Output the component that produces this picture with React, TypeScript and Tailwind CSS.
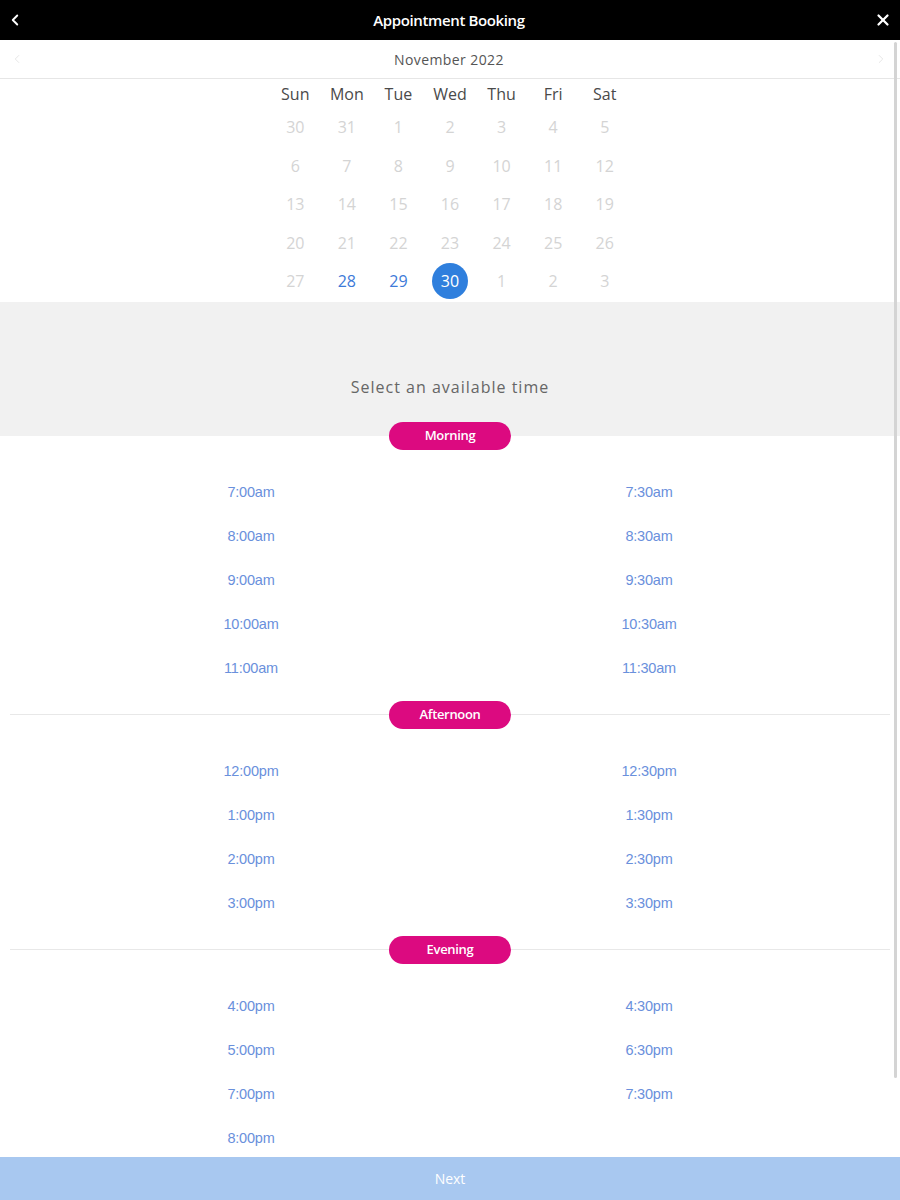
import { ChevronLeft, ChevronRight, X } from "lucide-react";

const weekdays = ["Sun", "Mon", "Tue", "Wed", "Thu", "Fri", "Sat"];

const weeks: number[][] = [
  [30, 31, 1, 2, 3, 4, 5],
  [6, 7, 8, 9, 10, 11, 12],
  [13, 14, 15, 16, 17, 18, 19],
  [20, 21, 22, 23, 24, 25, 26],
  [27, 28, 29, 30, 1, 2, 3],
];

const sections = [
  {
    name: "Morning",
    times: [
      ["7:00am", "7:30am"],
      ["8:00am", "8:30am"],
      ["9:00am", "9:30am"],
      ["10:00am", "10:30am"],
      ["11:00am", "11:30am"],
    ],
  },
  {
    name: "Afternoon",
    times: [
      ["12:00pm", "12:30pm"],
      ["1:00pm", "1:30pm"],
      ["2:00pm", "2:30pm"],
      ["3:00pm", "3:30pm"],
    ],
  },
  {
    name: "Evening",
    times: [
      ["4:00pm", "4:30pm"],
      ["5:00pm", "6:30pm"],
      ["7:00pm", "7:30pm"],
      ["8:00pm", ""],
    ],
  },
];

const Pill = ({ label }: { label: string }) => (
  <div
    className="w-[122px] h-[28px] rounded-full bg-[#dc0a80] text-white text-[13px] font-semibold tracking-tight flex items-center justify-center shrink-0"
    style={{ fontFamily: '"Open Sans", sans-serif' }}
  >
    {label}
  </div>
);

export default function App() {
  return (
    <div
      className="w-[900px] h-[1200px] relative overflow-hidden bg-white flex flex-col"
      style={{ fontFamily: '"Open Sans", "Noto Sans", sans-serif' }}
    >
      {/* header */}
      <div className="h-[40px] bg-black flex items-center justify-between px-[6px] shrink-0">
        <ChevronLeft className="w-[18px] h-[18px] text-white" strokeWidth={2.5} />
        <span className="text-white text-[15px] font-semibold tracking-tight">
          Appointment Booking
        </span>
        <X className="w-[18px] h-[18px] text-white mr-[2px]" strokeWidth={3} />
      </div>

      <div className="flex-1 overflow-hidden flex flex-col">
        {/* month bar */}
        <div className="h-[39px] border-b border-[#e6e6e6] flex items-center justify-between px-[10px] shrink-0">
          <ChevronLeft className="w-[14px] h-[14px] text-[#e2e2e2]" strokeWidth={1.5} />
          <span className="text-[14px] tracking-[0.4px] text-[#555]">November 2022</span>
          <ChevronRight className="w-[14px] h-[14px] text-[#e2e2e2] mr-[2px]" strokeWidth={1.5} />
        </div>

        {/* calendar */}
        <div className="w-[361px] mx-auto mt-[1px] shrink-0">
          <div className="grid grid-cols-7 h-[28px] items-center">
            {weekdays.map((d) => (
              <div key={d} className="text-center text-[16px] text-[#4a4a4a] leading-[22px]">
                {d}
              </div>
            ))}
          </div>
          {weeks.map((week, wi) => (
            <div key={wi} className="grid grid-cols-7 h-[38.5px] items-center">
              {week.map((day, di) => {
                const selected = wi === 4 && day === 30;
                const active = wi === 4 && (day === 28 || day === 29);
                return (
                  <div key={di} className="flex justify-center">
                    {selected ? (
                      <div className="w-[36px] h-[36px] rounded-full bg-[#2f7fdd] text-white text-[16px] flex items-center justify-center">
                        {day}
                      </div>
                    ) : (
                      <span
                        className={
                          active
                            ? "text-[16px] text-[#3d7ad8]"
                            : "text-[16px] text-[#d4d4d4]"
                        }
                      >
                        {day}
                      </span>
                    )}
                  </div>
                );
              })}
            </div>
          ))}
        </div>

        {/* prompt */}
        <div className="mt-[1px] h-[134px] bg-[#f1f1f1] pt-[75px] shrink-0">
          <p className="text-center text-[16px] leading-[20px] tracking-[1px] text-[#666]">
            Select an available time
          </p>
        </div>

        {/* times */}
        <div style={{ fontFamily: '"Liberation Sans", Arial, sans-serif' }}>
          {sections.map((s, si) => (
            <div key={s.name}>
              {si === 0 ? (
                <div className="-mt-[14px] flex justify-center">
                  <Pill label={s.name} />
                </div>
              ) : (
                <div className="mt-[10px] flex items-center px-[10px]">
                  <div className="flex-1 h-px bg-[#e8e8e8]" />
                  <Pill label={s.name} />
                  <div className="flex-1 h-px bg-[#e8e8e8]" />
                </div>
              )}
              <div className="mt-[21px] px-[52px]">
                {s.times.map(([a, b]) => (
                  <div key={a} className="grid grid-cols-2 h-[44px] items-center">
                    <span className="text-center text-[14.5px] text-[#6a90dc] tracking-[-0.2px]">{a}</span>
                    <span className="text-center text-[14.5px] text-[#6a90dc] tracking-[-0.2px]">{b}</span>
                  </div>
                ))}
              </div>
            </div>
          ))}
        </div>
      </div>

      {/* next */}
      <div className="h-[43px] bg-[#a8c8f0] flex items-center justify-center shrink-0">
        <span className="text-white text-[14px]">Next</span>
      </div>

      {/* scrollbar */}
      <div className="absolute right-[3px] top-[42px] w-[3px] h-[1036px] bg-[#d4d4d4] rounded-full" />
    </div>
  );
}
